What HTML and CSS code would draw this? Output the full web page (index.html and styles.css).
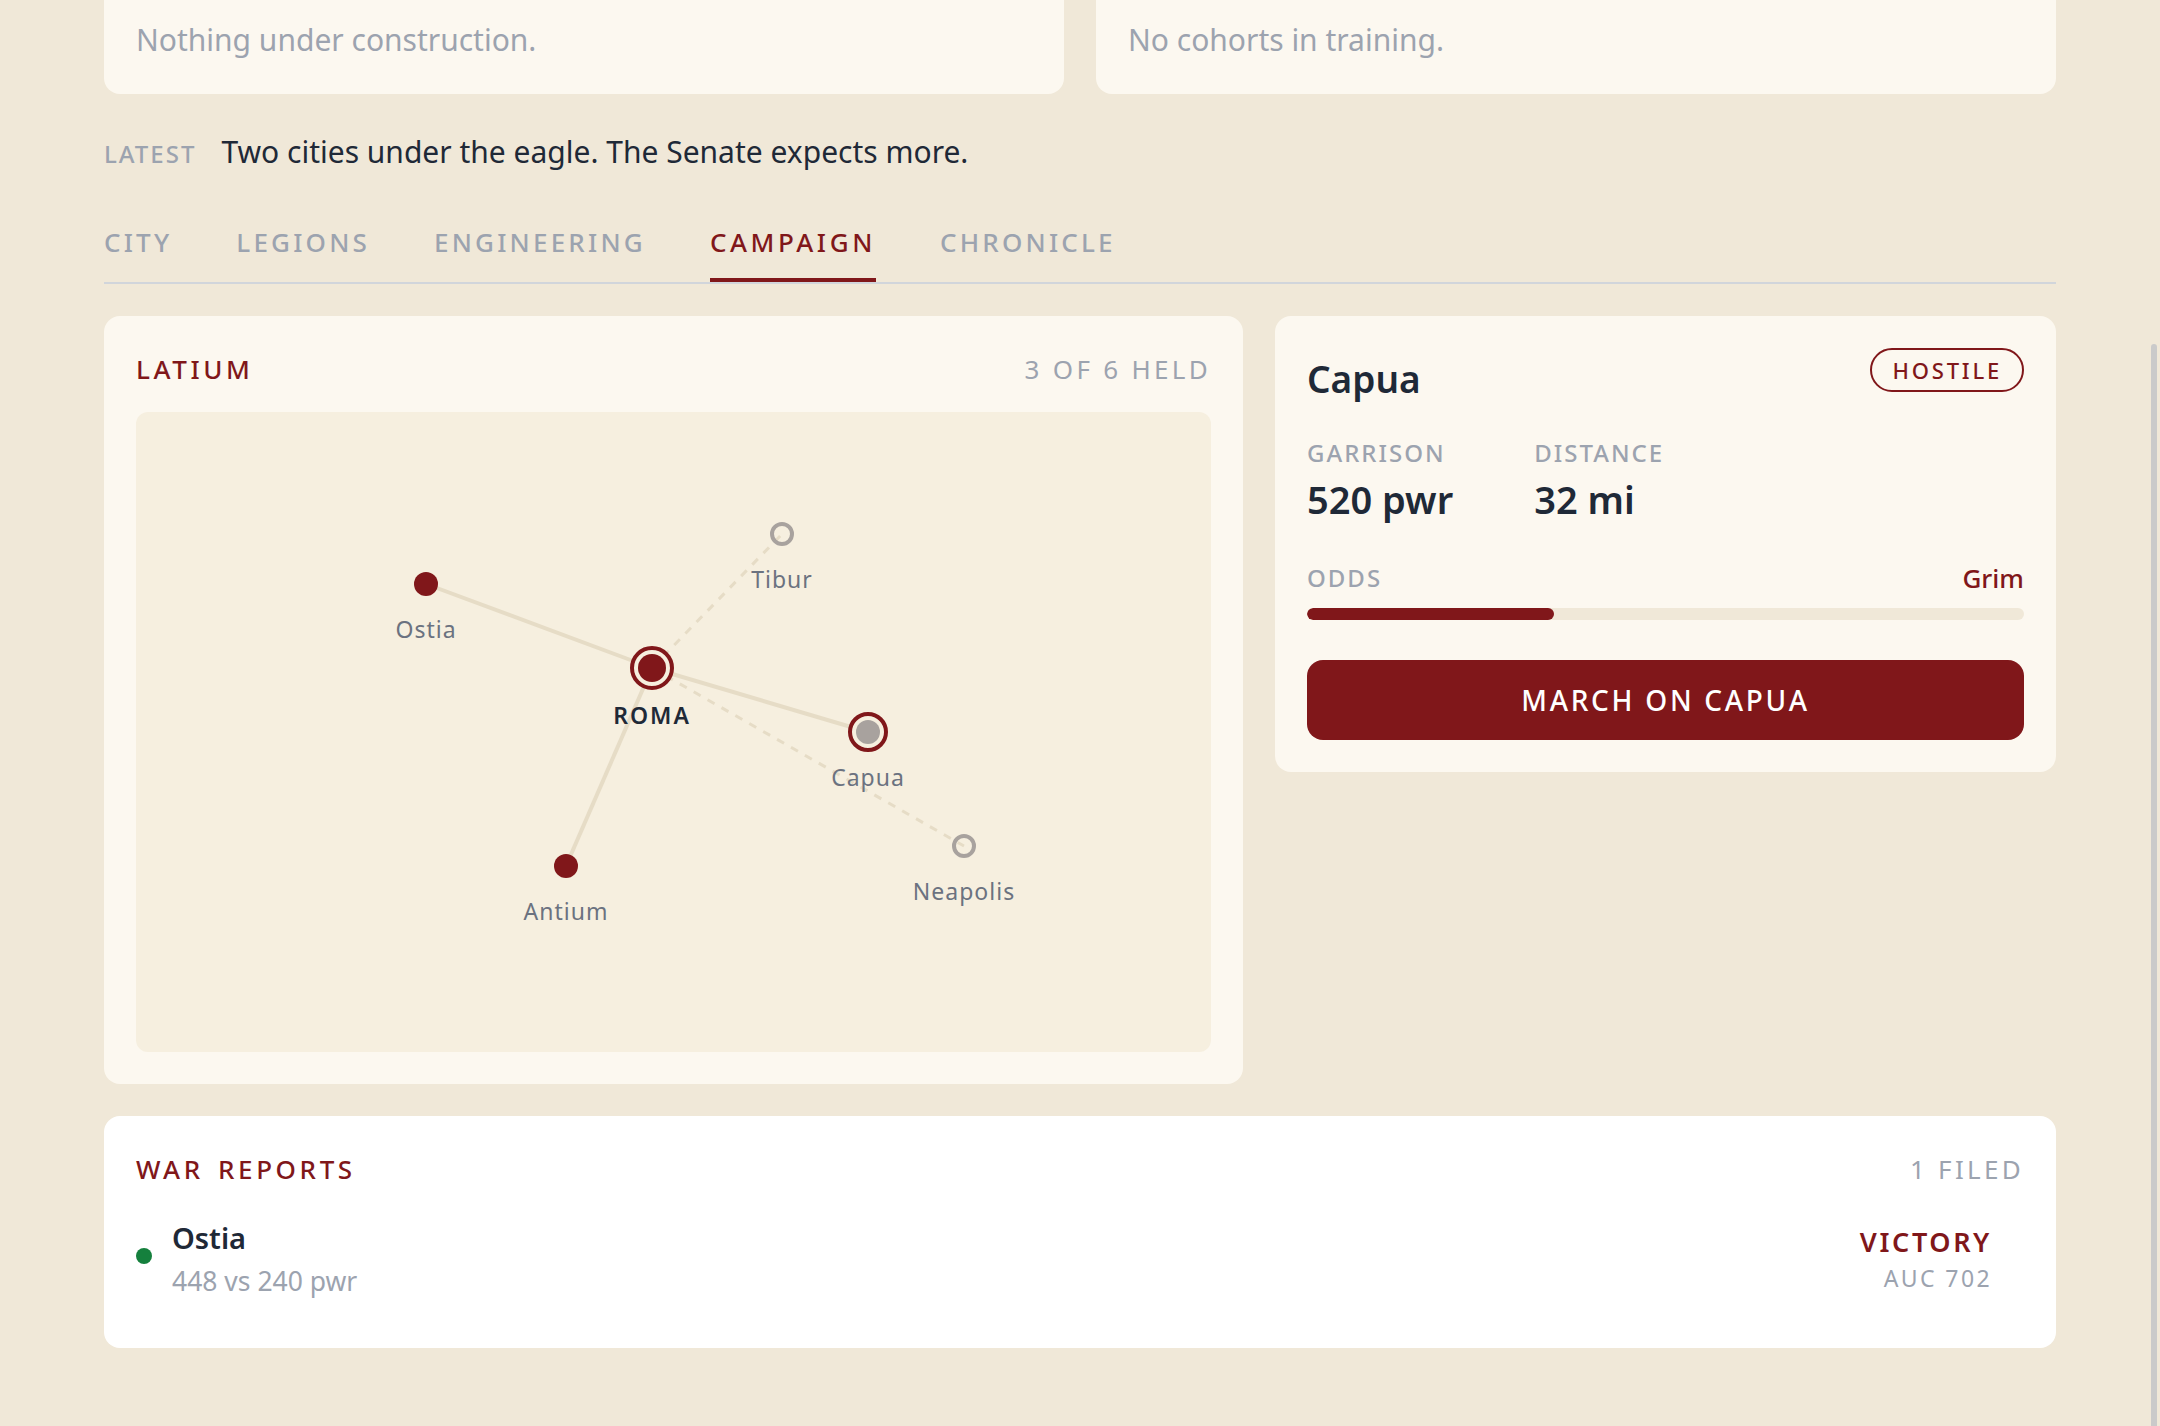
FILE: index.html
```html
<!DOCTYPE html>
<html lang="en">
<head>
  <meta charset="UTF-8" />
  <title>Campaign</title>
  <link rel="stylesheet" href="styles.css">
</head>
<body>

  <div class="page">
    <div class="queues">
      <div class="queue">Nothing under construction.</div>
      <div class="queue">No cohorts in training.</div>
    </div>

    <div class="latest">
      <span class="latest-label">LATEST</span>
      <span class="latest-text">Two cities under the eagle. The Senate expects more.</span>
    </div>

    <div class="tabs">
      <a class="tab">CITY</a>
      <a class="tab">LEGIONS</a>
      <a class="tab">ENGINEERING</a>
      <a class="tab active">CAMPAIGN</a>
      <a class="tab">CHRONICLE</a>
    </div>

    <div class="campaign">
      <div class="card">
        <div class="card-head">
          <span class="card-title">LATIUM</span>
          <span class="card-note">3 OF 6 HELD</span>
        </div>
        <div class="map">
          <svg viewBox="0 0 1075 640" width="1075" height="640">
            <g class="road">
              <line x1="516" y1="256" x2="290" y2="172" />
              <line x1="516" y1="256" x2="732" y2="320" />
              <line x1="516" y1="256" x2="430" y2="454" />
            </g>
            <g class="road dashed">
              <line x1="516" y1="256" x2="646" y2="122" />
              <line x1="516" y1="256" x2="828" y2="434" />
            </g>

            <circle class="held" cx="290" cy="172" r="12" />
            <text class="place" x="290" y="226">Ostia</text>

            <circle class="ring" cx="516" cy="256" r="20" />
            <circle class="held" cx="516" cy="256" r="14" />
            <text class="place capital" x="516" y="312">ROMA</text>

            <circle class="held" cx="430" cy="454" r="12" />
            <text class="place" x="430" y="508">Antium</text>

            <circle class="ring" cx="732" cy="320" r="18" />
            <circle class="enemy" cx="732" cy="320" r="12" />
            <text class="place" x="732" y="374">Capua</text>

            <circle class="open" cx="646" cy="122" r="10" />
            <text class="place" x="646" y="176">Tibur</text>

            <circle class="open" cx="828" cy="434" r="10" />
            <text class="place" x="828" y="488">Neapolis</text>
          </svg>
        </div>
      </div>

      <div class="card target">
        <div class="target-head">
          <h2>Capua</h2>
          <span class="badge">HOSTILE</span>
        </div>
        <div class="stats">
          <div>
            <div class="stat-label">GARRISON</div>
            <div class="stat-value">520 pwr</div>
          </div>
          <div>
            <div class="stat-label">DISTANCE</div>
            <div class="stat-value">32 mi</div>
          </div>
        </div>
        <div class="odds">
          <span class="stat-label">ODDS</span>
          <span class="odds-value">Grim</span>
        </div>
        <div class="bar"><div class="bar-fill" style="width: 34.4%"></div></div>
        <button class="march">MARCH ON CAPUA</button>
      </div>
    </div>

    <div class="card reports">
      <div class="card-head">
        <span class="card-title">WAR REPORTS</span>
        <span class="card-note">1 FILED</span>
      </div>
      <div class="report">
        <span class="dot"></span>
        <div class="report-main">
          <div class="report-name">Ostia</div>
          <div class="report-sub">448 vs 240 pwr</div>
        </div>
        <div class="report-side">
          <div class="report-result">VICTORY</div>
          <div class="report-date">AUC 702</div>
        </div>
      </div>
    </div>
  </div>

  <div class="scroll-thumb"></div>

</body>
</html>
```

FILE: styles.css
```css
html, body {
  margin: 0;
  padding: 0;
  height: 100%;
  overflow: hidden;
  background: #f0e8d8;
  font-family: "Noto Sans", "Open Sans", sans-serif;
  color: #1f2937;
}
.page {
  padding: 0 104px;
}
.queues {
  display: grid;
  grid-template-columns: 1fr 1fr;
  gap: 32px;
}
.queue {
  height: 94px;
  box-sizing: border-box;
  padding: 20px 32px 0;
  background: #fcf8f0;
  border-radius: 0 0 16px 16px;
  font-size: 30px;
  line-height: 40px;
  color: #9ca3af;
}
.latest {
  display: flex;
  align-items: baseline;
  gap: 25px;
  height: 40px;
  margin-top: 37px;
}
.latest-label {
  font-size: 24px;
  font-weight: 500;
  letter-spacing: 2px;
  color: #9ca3af;
}
.latest-text {
  font-size: 30px;
}
.tabs {
  display: flex;
  gap: 64px;
  margin-top: 27px;
  border-bottom: 2px solid #d1d5db;
}
.tab {
  padding: 23px 0 15px;
  height: 42px;
  line-height: 42px;
  border-bottom: 4px solid transparent;
  font-size: 26px;
  font-weight: 500;
  letter-spacing: 3.2px;
  color: #9ca3af;
}
.tab.active {
  letter-spacing: 3.6px;
  color: #80171a;
  border-bottom-color: #80171a;
}
.campaign {
  display: grid;
  grid-template-columns: 1139fr 781fr;
  gap: 32px;
  align-items: start;
  margin-top: 32px;
}
.card {
  padding: 32px;
  background: #fcf8f0;
  border-radius: 16px;
}
.card-head {
  display: flex;
  justify-content: space-between;
  align-items: center;
  height: 42px;
}
.card-title {
  font-size: 26px;
  font-weight: 500;
  letter-spacing: 3.6px;
  word-spacing: 4px;
  color: #80171a;
}
.card-note {
  font-size: 26px;
  letter-spacing: 3.3px;
  color: #9ca3af;
}
.map {
  margin-top: 22px;
  height: 640px;
  background: #f6efdf;
  border-radius: 12px;
  overflow: hidden;
}
.map svg {
  display: block;
}
.road line {
  stroke: #e6dcc6;
  stroke-width: 4;
}
.road.dashed line {
  stroke-width: 3;
  stroke-dasharray: 8 8;
}
.held {
  fill: #80171a;
}
.enemy {
  fill: #a8a29e;
}
.ring {
  fill: #f6efdf;
  stroke: #80171a;
  stroke-width: 4;
}
.open {
  fill: none;
  stroke: #a8a29e;
  stroke-width: 4;
}
.place {
  font-size: 23px;
  letter-spacing: 1px;
  text-anchor: middle;
  fill: #6b7280;
}
.place.capital {
  font-weight: 600;
  letter-spacing: 2px;
  fill: #1f2937;
}
.target-head {
  display: flex;
  justify-content: space-between;
  align-items: flex-start;
}
.target-head h2 {
  margin: 0;
  font-size: 37px;
  line-height: 62px;
  font-weight: 600;
}
.badge {
  padding: 0 20px;
  height: 40px;
  line-height: 40px;
  border: 2px solid #80171a;
  border-radius: 22px;
  font-size: 22px;
  font-weight: 500;
  letter-spacing: 2.8px;
  color: #80171a;
}
.stats {
  display: flex;
  gap: 81px;
  margin-top: 28px;
}
.stat-label {
  font-size: 24px;
  line-height: 30px;
  font-weight: 500;
  letter-spacing: 2px;
  color: #9ca3af;
}
.stat-value {
  font-size: 38px;
  line-height: 50px;
  margin-top: 6px;
  font-weight: 600;
}
.odds {
  display: flex;
  justify-content: space-between;
  align-items: center;
  margin-top: 36px;
}
.odds-value {
  font-size: 26px;
  font-weight: 500;
  color: #80171a;
}
.bar {
  height: 12px;
  margin-top: 12px;
  background: #f0e8d8;
  border-radius: 6px;
  overflow: hidden;
}
.bar-fill {
  height: 100%;
  background: #80171a;
  border-radius: 6px;
}
.march {
  display: block;
  width: 100%;
  height: 80px;
  margin-top: 40px;
  border: none;
  border-radius: 16px;
  background: #80171a;
  color: #fff;
  font-family: inherit;
  font-size: 28px;
  font-weight: 500;
  letter-spacing: 2.7px;
}
.reports {
  margin-top: 32px;
  background: #fff;
}
.report {
  display: flex;
  align-items: center;
  gap: 20px;
  padding: 28px 32px 12px 0;
}
.dot {
  width: 16px;
  height: 16px;
  margin-bottom: 10px;
  border-radius: 50%;
  background: #15803d;
}
.report-main {
  flex: 1;
}
.report-name {
  font-size: 29px;
  line-height: 40px;
  font-weight: 600;
}
.report-sub {
  font-size: 26.5px;
  line-height: 46px;
  color: #9ca3af;
}
.report-side {
  margin-bottom: 2px;
  text-align: right;
}
.report-result {
  font-size: 27px;
  line-height: 36px;
  font-weight: 600;
  letter-spacing: 2.6px;
  color: #80171a;
}
.report-date {
  font-size: 23px;
  line-height: 36px;
  letter-spacing: 2.4px;
  color: #9ca3af;
}
.scroll-thumb {
  position: fixed;
  top: 344px;
  bottom: 0;
  right: 3px;
  width: 6px;
  background: #cacaca;
  border-radius: 3px 3px 0 0;
}
```
